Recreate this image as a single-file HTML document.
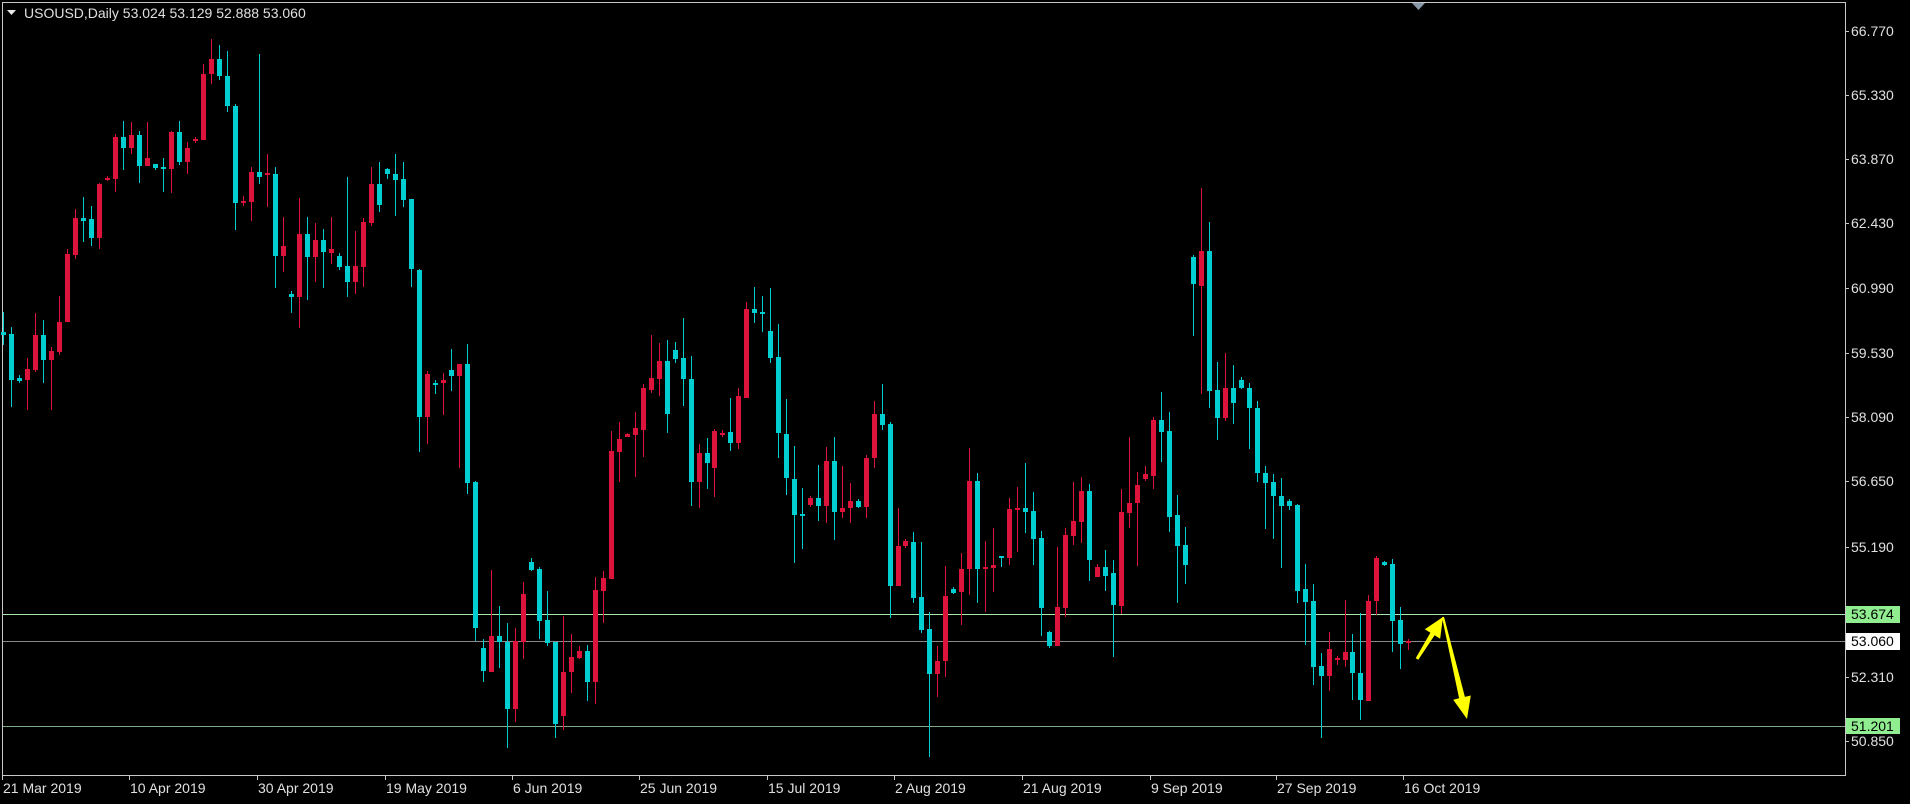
<!DOCTYPE html>
<html><head><meta charset="utf-8"><style>
html,body{margin:0;padding:0;background:#000;}
body{width:1910px;height:804px;overflow:hidden;}
svg{display:block}
text{font-family:"Liberation Sans",sans-serif;}
</style></head><body>
<svg width="1910" height="804" viewBox="0 0 1910 804" xmlns="http://www.w3.org/2000/svg">
<rect width="1910" height="804" fill="#000"/>
<path d="M2.5 2.5 H1845.5 V775.5 H2.5 Z" fill="none" stroke="#c8c8c8" stroke-width="1"/>
<path d="M3 614.5 H1845" stroke="#a8e8a8" stroke-width="1"/>
<path d="M3 641.5 H1845" stroke="#8a8a8a" stroke-width="1"/>
<path d="M3 726.5 H1845" stroke="#7fa87f" stroke-width="1"/>
<polygon points="7,10 16,10 11.5,15" fill="#e8e8e8"/>
<text x="24" y="18" font-size="14" fill="#e0e0e0">USOUSD,Daily  53.024 53.129 52.888 53.060</text>
<polygon points="1412,3 1425,3 1418.5,10" fill="#8898a8"/>
<g stroke="#00ced1" fill="none">
<path stroke-width="1" d="M3.5 312V345M11.5 327V407M19.5 375V383M43.5 320V383M83.5 197V242M91.5 206V246M123.5 121V170M139.5 131V183M155.5 164V170M163.5 158V192M179.5 121V165M219.5 45V80M227.5 51V112M235.5 104V230M259.5 54V184M275.5 167V288M291.5 291V313M307.5 217V300M323.5 229V288M339.5 253V270M347.5 177V297M379.5 162V212M387.5 168V179M395.5 154V216M403.5 162V207M411.5 199V287M419.5 269V452M435.5 380V394M451.5 349V391M467.5 344V494M475.5 481V641M483.5 639V682M499.5 606V668M507.5 623V748M531.5 558V571M539.5 567V639M547.5 591V646M555.5 642V738M587.5 645V701M667.5 340V433M675.5 342V363M683.5 318V406M691.5 356V506M707.5 438V489M730.5 398V451M754.5 287V323M762.5 296V332M770.5 288V363M778.5 324V458M786.5 399V495M794.5 446V563M802.5 488V549M818.5 465V521M834.5 437V540M858.5 499V508M882.5 384V430M890.5 422V618M913.5 532V603M921.5 542V633M929.5 612V757M953.5 587V594M977.5 473V603M1001.5 556V567M1025.5 463V533M1033.5 492V565M1041.5 531V636M1049.5 631V648M1089.5 484V581M1105.5 550V591M1113.5 560V657M1161.5 392V462M1169.5 412V532M1177.5 495V603M1185.5 527V584M1193.5 255V336M1209.5 222V408M1217.5 362V440M1233.5 365V424M1241.5 377V389M1249.5 383V449M1257.5 401V482M1265.5 466V529M1273.5 474V539M1281.5 478V568M1289.5 499V510M1297.5 504V603M1305.5 564V645M1313.5 584V685M1321.5 653V738M1352.5 634V700M1360.5 613V720M1384.5 561V566M1392.5 559V652M1400.5 607V669"/>
<path stroke-width="5" d="M3.5 332V335M11.5 334V380M19.5 378V381M43.5 335V360M83.5 218V221M91.5 219V238M123.5 137V148M139.5 135V166M155.5 164V168M163.5 167V169M179.5 132V162M219.5 59V76M227.5 76V106M235.5 106V203M259.5 172V177M275.5 174V256M291.5 294V297M307.5 234V257M323.5 240V252M339.5 256V267M347.5 266V282M379.5 184V205M387.5 169V174M395.5 174V180M403.5 179V200M411.5 199V269M419.5 270V417M435.5 383V385M451.5 370V376M467.5 364V483M475.5 482V628M483.5 648V671M499.5 636V642M507.5 642V709M531.5 562V570M539.5 569V621M547.5 620V643M555.5 642V724M587.5 651V682M667.5 361V414M675.5 350V359M683.5 358V379M691.5 379V482M707.5 453V463M730.5 432V443M754.5 309V313M762.5 312V314M770.5 331V358M778.5 357V433M786.5 434V478M794.5 479V515M802.5 514V516M818.5 498V506M834.5 461V512M858.5 501V507M882.5 414V425M890.5 424V586M913.5 542V598M921.5 597V630M929.5 629V674M953.5 589V593M977.5 481V569M1001.5 556V558M1025.5 508V512M1033.5 511V539M1041.5 538V608M1049.5 632V646M1089.5 491V560M1105.5 567V576M1113.5 573V605M1161.5 420V432M1169.5 431V517M1177.5 515V546M1185.5 545V565M1193.5 257V284M1209.5 251V391M1217.5 390V418M1233.5 388V403M1241.5 380V388M1249.5 388V408M1257.5 408V473M1265.5 473V483M1273.5 482V496M1281.5 496V506M1289.5 501V506M1297.5 505V591M1305.5 589V602M1313.5 601V667M1321.5 666V676M1352.5 652V673M1360.5 673V700M1384.5 562V565M1392.5 564V621M1400.5 620V644"/>
</g>
<g stroke="#dc143c" fill="none">
<path stroke-width="1" d="M27.5 358V410M35.5 313V372M51.5 347V410M59.5 296V355M67.5 249V322M75.5 209V259M99.5 183V249M107.5 176V181M115.5 134V192M131.5 122V154M147.5 122V166M171.5 131V193M187.5 142V174M195.5 137V143M203.5 64V140M211.5 39V84M243.5 196V206M251.5 167V221M267.5 154V207M283.5 217V272M299.5 198V328M315.5 223V282M331.5 217V264M355.5 231V294M363.5 218V287M371.5 167V226M427.5 371V444M443.5 373V415M459.5 364V468M491.5 570V672M515.5 628V722M523.5 582V659M563.5 616V730M571.5 634V693M579.5 646V659M595.5 577V704M603.5 571V623M611.5 431V579M619.5 422V482M627.5 433V437M635.5 412V477M643.5 384V457M651.5 335V393M659.5 343V396M699.5 444V508M714.5 429V497M722.5 430V437M738.5 388V449M746.5 302V398M810.5 496V507M826.5 447V523M842.5 466V518M850.5 483V523M866.5 455V518M874.5 401V468M898.5 508V586M905.5 539V548M937.5 646V697M945.5 566V677M961.5 553V625M969.5 448V595M985.5 541V612M993.5 528V592M1009.5 498V565M1017.5 487V552M1057.5 547V646M1065.5 528V617M1073.5 482V545M1081.5 477V543M1097.5 564V577M1121.5 489V614M1129.5 437V528M1137.5 472V566M1145.5 466V481M1153.5 417V489M1201.5 188V394M1225.5 353V421M1329.5 632V691M1337.5 656V665M1345.5 600V667M1368.5 595V701M1376.5 556V615M1408.5 639V650"/>
<path stroke-width="5" d="M27.5 369V380M35.5 335V370M51.5 351V360M59.5 322V352M67.5 254V322M75.5 218V255M99.5 184V238M107.5 178V180M115.5 137V179M131.5 135V148M147.5 158V166M171.5 132V169M187.5 148V162M195.5 139V141M203.5 74V140M211.5 59V74M243.5 201V203M251.5 172V202M267.5 173V175M283.5 246V256M299.5 234V297M315.5 240V257M331.5 249V253M355.5 266V282M363.5 222V267M371.5 184V223M427.5 374V417M443.5 380V383M459.5 364V376M491.5 636V672M515.5 641V709M523.5 594V642M563.5 672V716M571.5 657V672M579.5 651V658M595.5 590V682M603.5 578V591M611.5 451V579M619.5 439V452M627.5 434V437M635.5 428V435M643.5 388V430M651.5 378V390M659.5 361V379M699.5 453V482M714.5 431V468M722.5 433V435M738.5 396V443M746.5 309V398M810.5 498V505M826.5 461V506M842.5 508V512M850.5 501V508M866.5 458V507M874.5 414V458M898.5 546V586M905.5 541V546M937.5 661V674M945.5 596V661M961.5 569V592M969.5 481V569M985.5 567V569M993.5 565V568M1009.5 509V558M1017.5 508V510M1057.5 607V646M1065.5 535V608M1073.5 521V536M1081.5 491V522M1097.5 567V577M1121.5 512V606M1129.5 503V513M1137.5 485V503M1145.5 474V479M1153.5 420V476M1201.5 251V286M1225.5 388V418M1329.5 649V676M1337.5 658V660M1345.5 652V660M1368.5 601V701M1376.5 558V601M1408.5 641V643"/>
</g>
<polygon points="1415.7,658.2 1430.4,632.7 1424.85,629.3 1443,617 1440.15,638.7 1434.6,635.3 1418.3,659.8" fill="#ffff00"/>
<polygon points="1442,617.2 1459.1,698.3 1453.2,699.7 1467,719 1470.8,695.5 1464.9,696.9 1444,616.8" fill="#ffff00"/>
<g stroke="#c8c8c8" stroke-width="1">
<path d="M1845 31.5h4M1845 95.5h4M1845 159.5h4M1845 223.5h4M1845 288.5h4M1845 353.5h4M1845 417.5h4M1845 481.5h4M1845 547.5h4M1845 677.5h4M1845 741.5h4"/>
<path d="M2.5 775v5M129.5 775v5M257.5 775v5M385.5 775v5M512.5 775v5M639.5 775v5M767.5 775v5M894.5 775v5M1022.5 775v5M1150.5 775v5M1276.5 775v5M1403.5 775v5"/>
</g>
<g font-size="14" fill="#e0e0e0">
<text x="1851" y="36">66.770</text>
<text x="1851" y="100">65.330</text>
<text x="1851" y="164">63.870</text>
<text x="1851" y="228">62.430</text>
<text x="1851" y="293">60.990</text>
<text x="1851" y="358">59.530</text>
<text x="1851" y="422">58.090</text>
<text x="1851" y="486">56.650</text>
<text x="1851" y="552">55.190</text>
<text x="1851" y="682">52.310</text>
<text x="1851" y="746">50.850</text>
</g>
<rect x="1846" y="606" width="54" height="17" fill="#90ee90"/>
<text x="1851" y="619" font-size="14" fill="#000">53.674</text>
<rect x="1846" y="633" width="54" height="17" fill="#ffffff"/>
<text x="1851" y="646" font-size="14" fill="#000">53.060</text>
<rect x="1846" y="718" width="54" height="16" fill="#90ee90"/>
<text x="1851" y="731" font-size="14" fill="#000">51.201</text>
<g font-size="14" fill="#e0e0e0">
<text x="3" y="793">21 Mar 2019</text>
<text x="130" y="793">10 Apr 2019</text>
<text x="258" y="793">30 Apr 2019</text>
<text x="386" y="793">19 May 2019</text>
<text x="513" y="793">6 Jun 2019</text>
<text x="640" y="793">25 Jun 2019</text>
<text x="768" y="793">15 Jul 2019</text>
<text x="895" y="793">2 Aug 2019</text>
<text x="1023" y="793">21 Aug 2019</text>
<text x="1151" y="793">9 Sep 2019</text>
<text x="1277" y="793">27 Sep 2019</text>
<text x="1404" y="793">16 Oct 2019</text>
</g>
</svg>
</body></html>
